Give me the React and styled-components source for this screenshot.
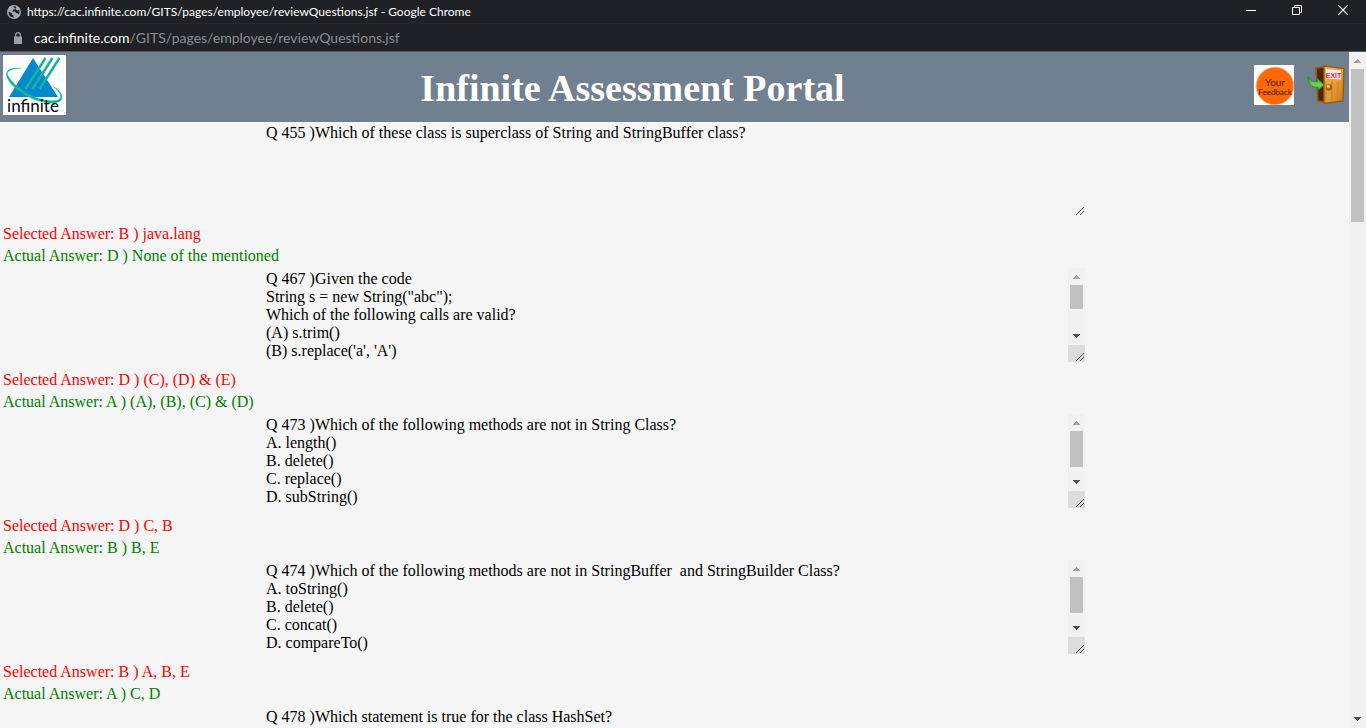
import React from "react";
import styled, { createGlobalStyle } from "styled-components";

const GlobalStyle = createGlobalStyle`
  * { box-sizing: border-box; }
  html, body { margin: 0; padding: 0; background: #f5f5f5; overflow: hidden; }
`;

const Window = styled.div`
  display: flex;
  flex-direction: column;
  height: 100vh;
  overflow: hidden;
`;

const TitleBar = styled.div`
  display: flex;
  align-items: center;
  flex: none;
  height: 24px;
  padding-left: 7px;
  gap: 6px;
  background: #202124;
  color: #fff;
  font: 12px/24px Lato, "Noto Sans", sans-serif;
  border-bottom: 1px solid #26282b;
`;

const WindowTitle = styled.span`
  flex: 1;
  white-space: nowrap;
`;

const WindowControls = styled.div`
  display: flex;
  align-self: flex-start;
`;

const WindowButton = styled.button`
  display: flex;
  align-items: center;
  justify-content: center;
  width: 46px;
  height: 20px;
  padding: 0;
  border: 0;
  background: none;
  color: #fff;
`;

const AddressBar = styled.div`
  display: flex;
  align-items: center;
  flex: none;
  height: 28px;
  padding-left: 13px;
  gap: 11px;
  background: #202124;
  border-bottom: 1px solid #55585c;
  color: #8b8d90;
  font: 14px/26px Lato, "Noto Sans", sans-serif;
  white-space: nowrap;
`;

const Host = styled.span`
  color: #fff;
`;

const Viewport = styled.div`
  display: flex;
  flex: 1;
  min-height: 0;
`;

const Page = styled.div`
  flex: 1;
  min-width: 0;
  overflow: hidden;
  background: #f5f5f5;
  font: 16px/22px "Liberation Serif", serif;
`;

const Header = styled.header`
  display: grid;
  grid-template-columns: 63px 1fr 150px;
  height: 70px;
  padding-left: 3px;
  background: #708090;
`;

const LogoLink = styled.a`
  display: block;
  height: 60px;
  margin-top: 3px;
`;

const Title = styled.h1`
  margin: 0;
  color: #fff;
  font: bold 38px/72px "Liberation Serif", serif;
  text-align: center;
  white-space: nowrap;
`;

const HeaderActions = styled.nav`
  display: flex;
  justify-content: flex-end;
  gap: 13px;
  padding: 13px 2px 0 0;
`;

const ActionLink = styled.a`
  display: block;
  width: 40px;
  height: 40px;
`;

const QuestionItem = styled.section`
  display: flex;
  flex-direction: column;
  padding-bottom: 1px;
`;

const QuestionBox = styled.div`
  display: flex;
  position: relative;
  width: 821px;
  max-width: 100%;
  height: 94px;
  margin: 0 auto 7px;
`;

const QuestionText = styled.textarea`
  flex: 1;
  min-width: 0;
  padding: 2px;
  border: 0;
  outline: 0;
  overflow: hidden;
  resize: none;
  background: transparent;
  color: #000;
  font: 16px/18px "Liberation Serif", serif;
`;

const Answer = styled.p`
  margin: 0;
  padding-left: 3px;
  color: ${(p) => (p.$actual ? "#008000" : "#ff0000")};
`;

const ScrollTrack = styled.div`
  display: flex;
  flex-direction: column;
  flex: none;
  width: 17px;
  background: #f1f1f1;
`;

const ScrollArrow = styled.button`
  display: flex;
  align-items: center;
  justify-content: center;
  flex: none;
  width: 17px;
  height: 17px;
  padding: 0;
  border: 0;
  background: none;
`;

const ScrollRun = styled.div`
  flex: 1;
  padding: 0 2px;
`;

const ScrollThumb = styled.div`
  height: ${(p) => p.$size}px;
  background: #c1c1c1;
`;

const Corner = styled.div`
  flex: none;
  width: 17px;
  height: 17px;
  background: #dcdcdc;
`;

const FloatingGrip = styled.div`
  position: absolute;
  right: 0;
  bottom: 0;
  width: 17px;
  height: 17px;
`;

function Grip() {
  return (
    <svg width="17" height="17" viewBox="0 0 17 17" display="block" aria-hidden="true">
      <path d="M8 16L16 8M12 16l4-4" stroke="#444" strokeWidth="1" />
    </svg>
  );
}

function Scrollbar({ thumb, resizable }) {
  return (
    <ScrollTrack>
      <ScrollArrow aria-label="Scroll up">
        <svg width="7" height="5" viewBox="0 0 7 5" shapeRendering="crispEdges">
          <path d="M3 1h1v1h1v1h1v1h1v1H0V4h1V3h1V2h1z" fill="#a3a3a3" />
        </svg>
      </ScrollArrow>
      <ScrollRun>
        <ScrollThumb $size={thumb} />
      </ScrollRun>
      <ScrollArrow aria-label="Scroll down">
        <svg width="7" height="5" viewBox="0 0 7 5" shapeRendering="crispEdges">
          <path d="M3 4h1V3h1V2h1V1h1V0H0v1h1v1h1v1h1z" fill="#505050" />
        </svg>
      </ScrollArrow>
      {resizable && (
        <Corner>
          <Grip />
        </Corner>
      )}
    </ScrollTrack>
  );
}

function InfiniteLogo() {
  return (
    <svg width="63" height="60" viewBox="0 0 63 60" role="img" aria-label="infinite">
      <path d="M0 0h63v60H0z" fill="#fff" />
      <path d="M30 3L55 42H6z" fill="#0588d0" />
      <g stroke="#16b3a0" strokeWidth="2.500" fill="none">
        <path d="M42.500 3L22.500 34M49.500 3L29.500 34M56.500 3L36.500 34" />
      </g>
      <path
        d="M18 13.500C9 12.500 3 14 3.500 20C5 30 22 42 36 46C48 49.500 59 49 59 42C59 37.500 54 33.500 50 31.500C55 35 58 39 57.500 42C56.500 47 46 46.500 36 43.500C22 39 7 27 4.600 19.500C3.500 15.500 10 13.500 18 13.500Z"
        fill="#16b3a0"
        stroke="#16b3a0"
        strokeWidth=".4"
      />
      <text x="30" y="57" textAnchor="middle" fontFamily="Lato, sans-serif" fontSize="17" fill="#050505">
        infinite
      </text>
    </svg>
  );
}

function FeedbackIcon() {
  return (
    <svg width="40" height="40" viewBox="0 0 40 40" aria-hidden="true">
      <path d="M0 0h40v40H0z" fill="#fff" />
      <circle cx="21" cy="21" r="18.800" fill="#ff6804" stroke="#f5b184" strokeWidth=".8" />
      <g fill="#6b2c08" stroke="#6b2c08" strokeWidth=".2" textAnchor="middle" fontFamily="Lato, sans-serif">
        <text x="21" y="21" fontSize="10">Your</text>
        <text x="21" y="30" fontSize="8">Feedback</text>
      </g>
    </svg>
  );
}

function ExitIcon() {
  return (
    <svg width="40" height="40" viewBox="0 0 40 40" aria-hidden="true">
      <defs>
        <linearGradient id="door" x1="0" y1="0" x2="1" y2="1">
          <stop offset="0" stopColor="#f6b957" />
          <stop offset=".55" stopColor="#e69a32" />
          <stop offset="1" stopColor="#c7781a" />
        </linearGradient>
        <linearGradient id="arrow" x1="0" y1="0" x2="0" y2="1">
          <stop offset="0" stopColor="#2d8d31" />
          <stop offset=".6" stopColor="#70dc5a" />
          <stop offset="1" stopColor="#2c9d2d" />
        </linearGradient>
      </defs>
      <path d="M9 3l10-1v35l-8-1z" fill="#4b2605" stroke="#94590d" strokeWidth="1.600" />
      <path d="M17 1l20 2.500-1 32.500-19 2.500z" fill="url(#door)" stroke="#9a5a0c" strokeWidth="1.400" />
      <path d="M19 16l-.2 20M25 16l-.2 19M31 16l-.2 18" stroke="#bd761f" strokeWidth=".7" />
      <path d="M19 4l15 1.500v9L19 13.500z" fill="#f5edf4" />
      <text x="26.500" y="12.500" textAnchor="middle" fontFamily="Liberation Sans, sans-serif" fontWeight="bold" fontSize="7" fill="#e51c2e">
        EXIT
      </text>
      <circle cx="22" cy="22.500" r="3.300" fill="#a95e14" />
      <circle cx="21.300" cy="21.500" r="1.700" fill="#f0bd7d" />
      <path d="M1 11.500c2 4 5 5.500 9.500 4.800L10 13l7 7-6 5.500v-3C4.500 22.500.5 18 1 11.500z" fill="url(#arrow)" stroke="#248328" strokeWidth=".8" />
    </svg>
  );
}

const questions = [
  {
    text: "Q 455 )Which of these class is superclass of String and StringBuffer class?",
    selected: "B ) java.lang",
    actual: "D ) None of the mentioned",
  },
  {
    text: "Q 467 )Given the code\nString s = new String(\"abc\");\nWhich of the following calls are valid?\n(A) s.trim()\n(B) s.replace('a', 'A')",
    thumb: 24,
    selected: "D ) (C), (D) & (E)",
    actual: "A ) (A), (B), (C) & (D)",
  },
  {
    text: "Q 473 )Which of the following methods are not in String Class?\nA. length()\nB. delete()\nC. replace()\nD. subString()",
    thumb: 36,
    selected: "D ) C, B",
    actual: "B ) B, E",
  },
  {
    text: "Q 474 )Which of the following methods are not in StringBuffer  and StringBuilder Class?\nA. toString()\nB. delete()\nC. concat()\nD. compareTo()",
    thumb: 36,
    selected: "B ) A, B, E",
    actual: "A ) C, D",
  },
  { text: "Q 478 )Which statement is true for the class HashSet?" },
];

function Question({ text, thumb, selected, actual }) {
  return (
    <QuestionItem>
      <QuestionBox>
        <QuestionText readOnly rows={5} value={text} aria-label={text.split(" )")[0]} />
        {thumb ? (
          <Scrollbar thumb={thumb} resizable />
        ) : (
          <FloatingGrip>
            <Grip />
          </FloatingGrip>
        )}
      </QuestionBox>
      {selected && <Answer>Selected Answer: {selected}</Answer>}
      {actual && <Answer $actual>Actual Answer: {actual}</Answer>}
    </QuestionItem>
  );
}

export default function App() {
  return (
    <Window>
      <GlobalStyle />
      <TitleBar>
        <svg width="14" height="14" viewBox="0 0 14 14" aria-hidden="true">
          <circle cx="7" cy="7" r="7" fill="#a5a8ac" />
          <path d="M1.500 6.500L5 8v1.500l1.500 1v2C3.500 12.500 1.300 9.500 1.500 6.500zM6 1.500h3v1.800L7.500 4.500H6v1.300L4.800 6.500h3.400l1 1.800h1.600l1 1.200c.8-1 1-3.500.3-5L10.500 5.500 9 4.500" fill="#202124" />
        </svg>
        <WindowTitle>https://cac.infinite.com/GITS/pages/employee/reviewQuestions.jsf - Google Chrome</WindowTitle>
        <WindowControls>
          <WindowButton aria-label="Minimize">
            <svg width="10" height="10" viewBox="0 0 10 10"><path d="M0 5.500h10" stroke="#fff" /></svg>
          </WindowButton>
          <WindowButton aria-label="Restore">
            <svg width="10" height="10" viewBox="0 0 10 10" fill="none" stroke="#fff">
              <path d="M.5 2.500h7v7h-7zM2.500 2.500v-2h7v7h-2" />
            </svg>
          </WindowButton>
          <WindowButton aria-label="Close">
            <svg width="10" height="10" viewBox="0 0 10 10"><path d="M0 0l10 10M10 0L0 10" stroke="#fff" strokeWidth="1.200" /></svg>
          </WindowButton>
        </WindowControls>
      </TitleBar>
      <AddressBar>
        <svg width="10" height="12" viewBox="0 0 10 12" aria-hidden="true">
          <path d="M1 4.500h8V12H1z" fill="#9aa0a6" />
          <path d="M2.700 5V3a2.300 2.300 0 0 1 4.600 0v2" fill="none" stroke="#9aa0a6" strokeWidth="1.200" />
        </svg>
        <span>
          <Host>cac.infinite.com</Host>/GITS/pages/employee/reviewQuestions.jsf
        </span>
      </AddressBar>
      <Viewport>
        <Page>
          <Header>
            <LogoLink href="#home">
              <InfiniteLogo />
            </LogoLink>
            <Title>Infinite Assessment Portal</Title>
            <HeaderActions>
              <ActionLink href="#feedback" aria-label="Your feedback">
                <FeedbackIcon />
              </ActionLink>
              <ActionLink href="#exit" aria-label="Exit">
                <ExitIcon />
              </ActionLink>
            </HeaderActions>
          </Header>
          <main>
            {questions.map((q) => (
              <Question key={q.text} {...q} />
            ))}
          </main>
        </Page>
        <Scrollbar thumb={153} />
      </Viewport>
    </Window>
  );
}
